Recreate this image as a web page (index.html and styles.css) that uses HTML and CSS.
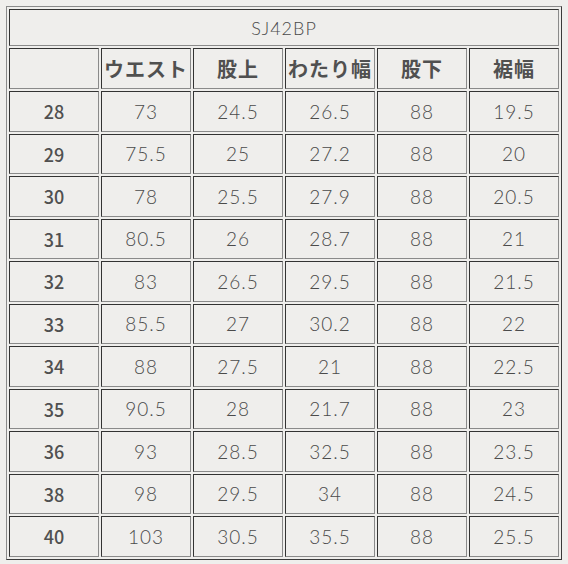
FILE: index.html
```html
<!DOCTYPE html>
<html lang="ja">
<head>
<meta charset="utf-8">
<link rel="stylesheet" href="styles.css">
</head>
<body>
<table class="size">
<tbody>
<tr class="title-row"><td colspan="6" class="title">SJ42BP</td></tr>
<tr class="head-row"><th></th><th>ウエスト</th><th>股上</th><th>わたり幅</th><th>股下</th><th>裾幅</th></tr>
<tr><th>28</th><td>73</td><td>24.5</td><td>26.5</td><td>88</td><td>19.5</td></tr>
<tr><th>29</th><td>75.5</td><td>25</td><td>27.2</td><td>88</td><td>20</td></tr>
<tr><th>30</th><td>78</td><td>25.5</td><td>27.9</td><td>88</td><td>20.5</td></tr>
<tr><th>31</th><td>80.5</td><td>26</td><td>28.7</td><td>88</td><td>21</td></tr>
<tr><th>32</th><td>83</td><td>26.5</td><td>29.5</td><td>88</td><td>21.5</td></tr>
<tr><th>33</th><td>85.5</td><td>27</td><td>30.2</td><td>88</td><td>22</td></tr>
<tr><th>34</th><td>88</td><td>27.5</td><td>21</td><td>88</td><td>22.5</td></tr>
<tr><th>35</th><td>90.5</td><td>28</td><td>21.7</td><td>88</td><td>23</td></tr>
<tr><th>36</th><td>93</td><td>28.5</td><td>32.5</td><td>88</td><td>23.5</td></tr>
<tr><th>38</th><td>98</td><td>29.5</td><td>34</td><td>88</td><td>24.5</td></tr>
<tr><th>40</th><td>103</td><td>30.5</td><td>35.5</td><td>88</td><td>25.5</td></tr>
</tbody>
</table>
</body>
</html>
```
FILE: styles.css
```css
html, body {
  margin: 0;
  padding: 0;
  background: #efeeec;
}
body {
  padding: 6px;
  font-family: "Lato", "Noto Sans CJK JP", sans-serif;
  color: #555;
}
.size {
  width: 556px;
  table-layout: fixed;
  border-collapse: separate;
  border-spacing: 2px;
  border: 1px solid;
  border-color: #8a8a8a #3a3a3a #3a3a3a #8a8a8a;
  background: #efeeec;
}
.size td, .size th {
  box-sizing: border-box;
  border: 1px solid;
  border-color: #333 #8a8a8a #8a8a8a #333;
  padding: 0;
  text-align: center;
  vertical-align: middle;
  height: 40.5px;
}
.size td {
  font-weight: 300;
  font-size: 19px;
  letter-spacing: 1px;
  color: #4a4a4a;
}
.size th {
  font-family: "Noto Sans CJK JP", sans-serif;
  font-weight: 500;
  font-size: 18px;
  color: #505050;
}
.size .title-row td {
  height: 37px;
  font-size: 18px;
}
.size .head-row th {
  height: 41px;
  font-weight: 700;
  font-size: 20px;
  letter-spacing: 1px;
}
```
